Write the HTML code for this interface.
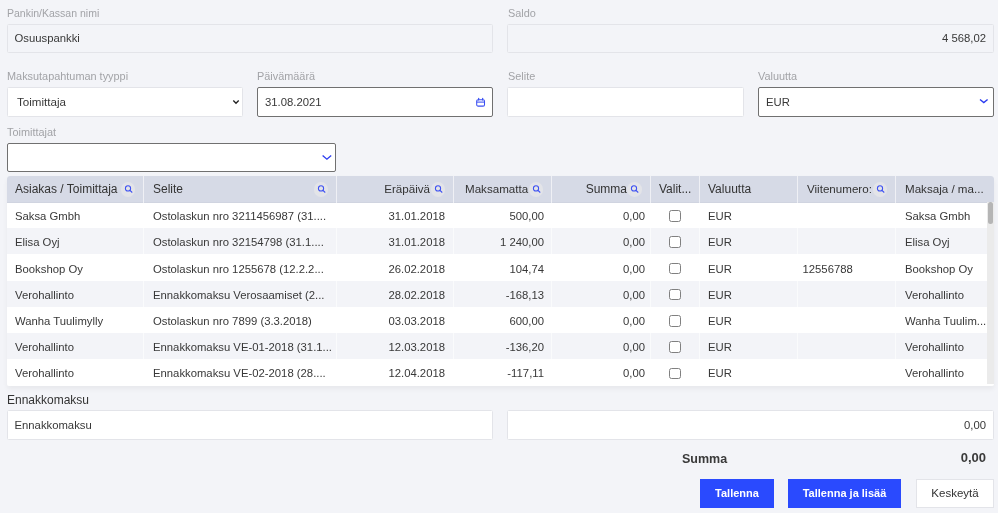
<!DOCTYPE html>
<html><head><meta charset="utf-8">
<style>
*{box-sizing:border-box;margin:0;padding:0}
html,body{width:998px;height:513px;overflow:hidden;background:#f3f4f8;font-family:"Liberation Sans",sans-serif;color:#333}
.a{position:absolute}
.lbl{position:absolute;font-size:10.9px;color:#a2a3a7;line-height:12px;margin-top:0.6px;white-space:nowrap}
.inp{position:absolute;height:29px;border:1px solid #e3e4e9;border-radius:1.5px;background:#fff;font-size:11.3px;color:#383838;line-height:27px;padding:0 7px;white-space:nowrap}
.dis{background:#f3f4f8}
.dark{border-color:#707070;border-radius:2px}
.tbl{position:absolute;left:6.5px;top:175.8px;width:987.5px;height:210.6px;border-radius:3px 3px 2px 2px;overflow:hidden;background:#fff;box-shadow:0 3px 5px rgba(0,0,0,0.05)}
.hdr{position:absolute;left:0;top:0;width:987.5px;height:27px;background:#d6dae6;border-bottom:1px solid #d0d4e0}
.row{position:absolute;left:0;width:980px}
.row.g{background:#f3f4f8}
.c{position:absolute;top:0;height:26px;line-height:26px;font-size:11.3px;white-space:nowrap;color:#383838;padding-top:1.3px}
.hc{font-size:12px;color:#333;padding-top:0}
.dv{position:absolute;top:0;width:1.6px;height:209px;background:rgba(255,255,255,0.6)}
.si{position:absolute;width:14.6px;height:14.6px;border-radius:50%;background:#e3e4e8}
.si svg{position:absolute;left:0;top:0}
.cb{position:absolute;width:11.5px;height:11.5px;border:1px solid #808080;border-radius:2.5px;background:#fff}
.btn{position:absolute;top:479px;height:29px;line-height:29px;text-align:center;font-size:11px;font-weight:700;color:#fff;background:#2a4afe}
#wrap{position:absolute;left:0;top:0;width:998px;height:513px;will-change:transform}
</style></head><body><div id="wrap">

<div class="lbl" style="left:7px;top:6px;font-size:10.5px">Pankin/Kassan nimi</div>
<div class="inp dis" style="left:6.5px;top:23.9px;height:28.9px;width:486.5px">Osuuspankki</div>
<div class="lbl" style="left:508px;top:6px">Saldo</div>
<div class="inp dis" style="left:507.3px;top:23.9px;height:28.9px;width:486.7px;text-align:right">4 568,02</div>

<div class="lbl" style="left:7px;top:69px">Maksutapahtuman tyyppi</div>
<div class="inp" style="left:6.5px;top:87px;height:30px;width:236.3px;padding-left:9.5px;font-size:11.6px;line-height:27.2px">Toimittaja
<svg class="a" style="left:224px;top:11px" width="8" height="6" viewBox="0 0 8 6"><polyline points="1.3,1.5 4,4.2 6.7,1.5" fill="none" stroke="#222" stroke-width="1.35"/></svg></div>
<div class="lbl" style="left:257px;top:69px">Päivämäärä</div>
<div class="inp dark" style="left:257px;top:87px;height:30px;line-height:28px;width:236px">31.08.2021
<svg class="a" style="left:217px;top:9px" width="12" height="12" viewBox="0 0 12 12"><rect x="1.7" y="2.7" width="7.8" height="6.4" rx="1.4" fill="none" stroke="#3a4ff2" stroke-width="1.05"/><line x1="1.7" y1="5.1" x2="9.5" y2="5.1" stroke="#3a4ff2" stroke-width="1.05"/><line x1="3.6" y1="1.3" x2="3.6" y2="2.9" stroke="#3a4ff2" stroke-width="1.1" stroke-linecap="round"/><line x1="7.6" y1="1.3" x2="7.6" y2="2.9" stroke="#3a4ff2" stroke-width="1.1" stroke-linecap="round"/></svg></div>
<div class="lbl" style="left:508px;top:69px">Selite</div>
<div class="inp" style="left:507px;top:87px;height:30px;width:236.6px"></div>
<div class="lbl" style="left:758px;top:69px">Valuutta</div>
<div class="inp dark" style="left:758px;top:87px;height:30px;line-height:28px;width:236px">EUR
<svg class="a" style="left:219px;top:9.7px" width="11" height="7" viewBox="0 0 11 7"><polyline points="2,1.5 5.8,4.6 9.6,1.5" fill="none" stroke="#2a3bf0" stroke-width="1.4"/></svg></div>

<div class="lbl" style="left:7px;top:125px">Toimittajat</div>
<div class="inp dark" style="left:6.5px;top:142.7px;height:29.4px;width:329.5px">
<svg class="a" style="left:312px;top:10px" width="13" height="8" viewBox="0 0 13 8"><polyline points="2.6,1.6 6.9,5.2 11.2,1.6" fill="none" stroke="#2a3bf0" stroke-width="1.3"/></svg></div>

<div class="tbl">
<div class="hdr"></div>
<div class="c hc" style="top:0.0px;height:26px;line-height:26px;left:8.5px;">Asiakas / Toimittaja</div>
<div class="c hc" style="top:0.0px;height:26px;line-height:26px;left:146.5px;">Selite</div>
<div class="c hc" style="top:0.0px;height:26px;line-height:26px;right:564.0px;text-align:right;font-size:11.6px">Eräpäivä</div>
<div class="c hc" style="top:0.0px;height:26px;line-height:26px;left:458.5px;font-size:11.6px">Maksamatta</div>
<div class="c hc" style="top:0.0px;height:26px;line-height:26px;right:367.0px;text-align:right;">Summa</div>
<div class="c hc" style="top:0.0px;height:26px;line-height:26px;left:652.5px;">Valit...</div>
<div class="c hc" style="top:0.0px;height:26px;line-height:26px;left:701.5px;">Valuutta</div>
<div class="c hc" style="top:0.0px;height:26px;line-height:26px;left:800.5px;font-size:11.6px">Viitenumero:</div>
<div class="c hc" style="top:0.0px;height:26px;line-height:26px;left:898.5px;font-size:11.6px">Maksaja / ma...</div>
<div class="si" style="left:114.4px;top:6.3px"><svg width="15" height="15" viewBox="0 0 15 15"><circle cx="7.0" cy="6.4" r="2.6" fill="none" stroke="#3f52f2" stroke-width="1.05"/><line x1="9.0" y1="8.4" x2="10.9" y2="10.2" stroke="#3f52f2" stroke-width="1.2" stroke-linecap="round"/></svg></div>
<div class="si" style="left:307.2px;top:6.3px"><svg width="15" height="15" viewBox="0 0 15 15"><circle cx="7.0" cy="6.4" r="2.6" fill="none" stroke="#3f52f2" stroke-width="1.05"/><line x1="9.0" y1="8.4" x2="10.9" y2="10.2" stroke="#3f52f2" stroke-width="1.2" stroke-linecap="round"/></svg></div>
<div class="si" style="left:424.2px;top:6.3px"><svg width="15" height="15" viewBox="0 0 15 15"><circle cx="7.0" cy="6.4" r="2.6" fill="none" stroke="#3f52f2" stroke-width="1.05"/><line x1="9.0" y1="8.4" x2="10.9" y2="10.2" stroke="#3f52f2" stroke-width="1.2" stroke-linecap="round"/></svg></div>
<div class="si" style="left:522.2px;top:6.3px"><svg width="15" height="15" viewBox="0 0 15 15"><circle cx="7.0" cy="6.4" r="2.6" fill="none" stroke="#3f52f2" stroke-width="1.05"/><line x1="9.0" y1="8.4" x2="10.9" y2="10.2" stroke="#3f52f2" stroke-width="1.2" stroke-linecap="round"/></svg></div>
<div class="si" style="left:620.5px;top:6.3px"><svg width="15" height="15" viewBox="0 0 15 15"><circle cx="7.0" cy="6.4" r="2.6" fill="none" stroke="#3f52f2" stroke-width="1.05"/><line x1="9.0" y1="8.4" x2="10.9" y2="10.2" stroke="#3f52f2" stroke-width="1.2" stroke-linecap="round"/></svg></div>
<div class="si" style="left:866.2px;top:6.3px"><svg width="15" height="15" viewBox="0 0 15 15"><circle cx="7.0" cy="6.4" r="2.6" fill="none" stroke="#3f52f2" stroke-width="1.05"/><line x1="9.0" y1="8.4" x2="10.9" y2="10.2" stroke="#3f52f2" stroke-width="1.2" stroke-linecap="round"/></svg></div>
<div class="row" style="top:26.5px;height:26.1px"></div>
<div class="row g" style="top:52.6px;height:26.1px"></div>
<div class="row" style="top:78.7px;height:26.1px"></div>
<div class="row g" style="top:104.8px;height:26.1px"></div>
<div class="row" style="top:130.9px;height:26.1px"></div>
<div class="row g" style="top:157.0px;height:26.1px"></div>
<div class="row" style="top:183.1px;height:26.1px"></div>
<div class="dv" style="left:136.4px"></div>
<div class="dv" style="left:329.4px"></div>
<div class="dv" style="left:446.4px"></div>
<div class="dv" style="left:544.4px"></div>
<div class="dv" style="left:643.4px"></div>
<div class="dv" style="left:692.4px"></div>
<div class="dv" style="left:790.4px"></div>
<div class="dv" style="left:888.4px"></div>
<div class="c" style="top:26.1px;height:26px;line-height:26px;left:8.5px;">Saksa Gmbh</div>
<div class="c" style="top:26.1px;height:26px;line-height:26px;left:146.5px;">Ostolaskun nro 3211456987 (31....</div>
<div class="c" style="top:26.1px;height:26px;line-height:26px;right:549.0px;text-align:right;">31.01.2018</div>
<div class="c" style="top:26.1px;height:26px;line-height:26px;right:450.0px;text-align:right;">500,00</div>
<div class="c" style="top:26.1px;height:26px;line-height:26px;right:349.0px;text-align:right;">0,00</div>
<div class="cb" style="left:662.5px;top:34.5px"></div>
<div class="c" style="top:26.1px;height:26px;line-height:26px;left:701.5px;">EUR</div>
<div class="c" style="top:26.1px;height:26px;line-height:26px;left:898.5px;">Saksa Gmbh</div>
<div class="c" style="top:52.3px;height:26px;line-height:26px;left:8.5px;">Elisa Oyj</div>
<div class="c" style="top:52.3px;height:26px;line-height:26px;left:146.5px;">Ostolaskun nro 32154798 (31.1....</div>
<div class="c" style="top:52.3px;height:26px;line-height:26px;right:549.0px;text-align:right;">31.01.2018</div>
<div class="c" style="top:52.3px;height:26px;line-height:26px;right:450.0px;text-align:right;">1 240,00</div>
<div class="c" style="top:52.3px;height:26px;line-height:26px;right:349.0px;text-align:right;">0,00</div>
<div class="cb" style="left:662.5px;top:60.7px"></div>
<div class="c" style="top:52.3px;height:26px;line-height:26px;left:701.5px;">EUR</div>
<div class="c" style="top:52.3px;height:26px;line-height:26px;left:898.5px;">Elisa Oyj</div>
<div class="c" style="top:78.5px;height:26px;line-height:26px;left:8.5px;">Bookshop Oy</div>
<div class="c" style="top:78.5px;height:26px;line-height:26px;left:146.5px;">Ostolaskun nro 1255678 (12.2.2...</div>
<div class="c" style="top:78.5px;height:26px;line-height:26px;right:549.0px;text-align:right;">26.02.2018</div>
<div class="c" style="top:78.5px;height:26px;line-height:26px;right:450.0px;text-align:right;">104,74</div>
<div class="c" style="top:78.5px;height:26px;line-height:26px;right:349.0px;text-align:right;">0,00</div>
<div class="cb" style="left:662.5px;top:86.9px"></div>
<div class="c" style="top:78.5px;height:26px;line-height:26px;left:701.5px;">EUR</div>
<div class="c" style="top:78.5px;height:26px;line-height:26px;left:796.0px;">12556788</div>
<div class="c" style="top:78.5px;height:26px;line-height:26px;left:898.5px;">Bookshop Oy</div>
<div class="c" style="top:104.8px;height:26px;line-height:26px;left:8.5px;">Verohallinto</div>
<div class="c" style="top:104.8px;height:26px;line-height:26px;left:146.5px;">Ennakkomaksu Verosaamiset (2...</div>
<div class="c" style="top:104.8px;height:26px;line-height:26px;right:549.0px;text-align:right;">28.02.2018</div>
<div class="c" style="top:104.8px;height:26px;line-height:26px;right:450.0px;text-align:right;">-168,13</div>
<div class="c" style="top:104.8px;height:26px;line-height:26px;right:349.0px;text-align:right;">0,00</div>
<div class="cb" style="left:662.5px;top:113.2px"></div>
<div class="c" style="top:104.8px;height:26px;line-height:26px;left:701.5px;">EUR</div>
<div class="c" style="top:104.8px;height:26px;line-height:26px;left:898.5px;">Verohallinto</div>
<div class="c" style="top:131.0px;height:26px;line-height:26px;left:8.5px;">Wanha Tuulimylly</div>
<div class="c" style="top:131.0px;height:26px;line-height:26px;left:146.5px;">Ostolaskun nro 7899 (3.3.2018)</div>
<div class="c" style="top:131.0px;height:26px;line-height:26px;right:549.0px;text-align:right;">03.03.2018</div>
<div class="c" style="top:131.0px;height:26px;line-height:26px;right:450.0px;text-align:right;">600,00</div>
<div class="c" style="top:131.0px;height:26px;line-height:26px;right:349.0px;text-align:right;">0,00</div>
<div class="cb" style="left:662.5px;top:139.4px"></div>
<div class="c" style="top:131.0px;height:26px;line-height:26px;left:701.5px;">EUR</div>
<div class="c" style="top:131.0px;height:26px;line-height:26px;left:898.5px;">Wanha Tuulim...</div>
<div class="c" style="top:157.2px;height:26px;line-height:26px;left:8.5px;">Verohallinto</div>
<div class="c" style="top:157.2px;height:26px;line-height:26px;left:146.5px;">Ennakkomaksu VE-01-2018 (31.1...</div>
<div class="c" style="top:157.2px;height:26px;line-height:26px;right:549.0px;text-align:right;">12.03.2018</div>
<div class="c" style="top:157.2px;height:26px;line-height:26px;right:450.0px;text-align:right;">-136,20</div>
<div class="c" style="top:157.2px;height:26px;line-height:26px;right:349.0px;text-align:right;">0,00</div>
<div class="cb" style="left:662.5px;top:165.6px"></div>
<div class="c" style="top:157.2px;height:26px;line-height:26px;left:701.5px;">EUR</div>
<div class="c" style="top:157.2px;height:26px;line-height:26px;left:898.5px;">Verohallinto</div>
<div class="c" style="top:183.4px;height:26px;line-height:26px;left:8.5px;">Verohallinto</div>
<div class="c" style="top:183.4px;height:26px;line-height:26px;left:146.5px;">Ennakkomaksu VE-02-2018 (28....</div>
<div class="c" style="top:183.4px;height:26px;line-height:26px;right:549.0px;text-align:right;">12.04.2018</div>
<div class="c" style="top:183.4px;height:26px;line-height:26px;right:450.0px;text-align:right;">-117,11</div>
<div class="c" style="top:183.4px;height:26px;line-height:26px;right:349.0px;text-align:right;">0,00</div>
<div class="cb" style="left:662.5px;top:191.8px"></div>
<div class="c" style="top:183.4px;height:26px;line-height:26px;left:701.5px;">EUR</div>
<div class="c" style="top:183.4px;height:26px;line-height:26px;left:898.5px;">Verohallinto</div>
<div class="a" style="left:980.5px;top:26.5px;width:7px;height:182.1px;background:#ebebeb"></div>
<div class="a" style="left:981.5px;top:26.5px;width:5px;height:22px;border-radius:3px;background:#b5b5b5"></div>
</div>

<div class="a" style="left:7px;top:393px;font-size:12px;color:#333;line-height:14px">Ennakkomaksu</div>
<div class="inp" style="left:6.5px;top:410px;height:30px;width:486.5px;line-height:29.5px">Ennakkomaksu</div>
<div class="inp" style="left:507.3px;top:410px;height:30px;width:486.7px;line-height:29.5px;text-align:right">0,00</div>

<div class="a" style="left:682px;top:451.5px;font-size:12.5px;font-weight:700;color:#3a3a3a">Summa</div>
<div class="a" style="left:940px;top:450px;width:46px;text-align:right;font-size:13px;font-weight:700;color:#3a3a3a">0,00</div>

<div class="btn" style="left:700px;width:74px">Tallenna</div>
<div class="btn" style="left:788px;width:113px">Tallenna ja lisää</div>
<div class="btn" style="left:916px;width:78px;background:#fff;color:#333;font-weight:400;font-size:11.5px;border:1px solid #e3e4e9;line-height:27px">Keskeytä</div>

</div></body></html>
